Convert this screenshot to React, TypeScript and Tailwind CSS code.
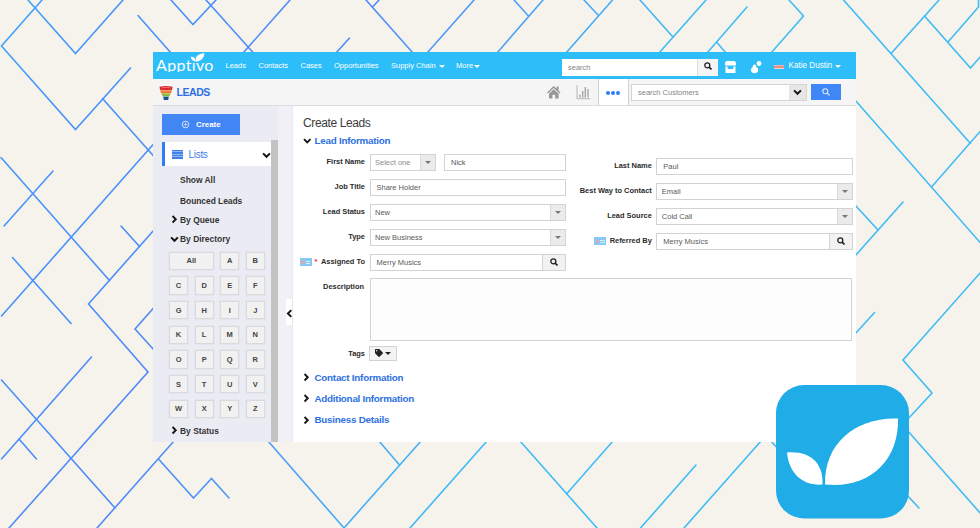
import React from "react";
import { FaTag } from "react-icons/fa";

const LINES = [
  "42,0 1.5,46 75.5,129.5 130.5,68",
  "28,0 75.5,53.5 123,0",
  "102.5,98.5 154,156.5",
  "154,143.5 1.5,316",
  "138,15.5 171,53",
  "171,0 193,24.5 216,0",
  "206,0 253.5,53",
  "243,53 290,0",
  "1,157.5 109.5,280.5",
  "53,171 4,226",
  "121,226 139.5,246.5",
  "154,230 88.5,304 148,372 9,528",
  "12.5,257.5 71,323.5",
  "154,307.5 135,329 154,350",
  "1.5,380 115,508",
  "91.5,357 1.5,459",
  "19,439 36.5,459",
  "174,441 97,528",
  "158.5,459 193.5,498 211.5,478.5 229,498",
  "268,441 344,528 421,441",
  "366,0 413,53",
  "379,0 372.5,7",
  "336,53 349.5,38",
  "427,53 474,0",
  "514,0 528.5,16",
  "543,0 497,53",
  "584,0 598.5,15.5",
  "612.5,0 566,53",
  "379,441 399.5,465",
  "487,441 410,528",
  "520,441 597,528",
  "613,441 566.5,494",
  "640,0 672.5,36.5",
  "706,0 659,53",
  "747,7 707,53",
  "716.5,42 726,53",
  "789,0 803.5,16 771,53",
  "843.5,0 970.5,143.5",
  "939,0 891.5,53",
  "924.5,16 970.5,68 981,56",
  "948,42 978.5,7 978.5,0",
  "855,100 981,243.5",
  "981,130.5 931.5,187",
  "855,205 878,230",
  "903,202 855,256",
  "874.5,312.5 855,334",
  "981,272 903,360 932,393 907,420",
  "907,430 981,514",
  "905,493 919,508",
  "696,465 640.5,528",
  "761,441 684,528",
  "771,441 780,451",
];

function Backdrop() {
  return (
    <svg className="absolute inset-0" width="980" height="528" viewBox="0 0 980 528" fill="none">
      <defs>
        <linearGradient id="ln" gradientUnits="userSpaceOnUse" x1="0" y1="0" x2="560" y2="280">
          <stop offset="0" stopColor="#3ea8f8" />
          <stop offset="0.15" stopColor="#4795fb" />
          <stop offset="0.5" stopColor="#4f88f8" />
          <stop offset="0.75" stopColor="#4ca0f7" />
          <stop offset="1" stopColor="#3fbbf6" />
        </linearGradient>
      </defs>
      {LINES.map((p) => (
        <polyline key={p} points={p} stroke="url(#ln)" strokeWidth="1.6" strokeLinecap="round" />
      ))}
    </svg>
  );
}

type ChevronProps = { dir: "down" | "right" | "left"; size?: number; className?: string };

function Chevron({ dir, size = 8, className = "" }: ChevronProps) {
  const d = dir === "down" ? "M1.200 2.600L5 6.400L8.800 2.600" : dir === "right" ? "M3 1.200L6.800 5L3 8.800" : "M7 1.200L3.200 5L7 8.800";
  return (
    <svg width={size} height={size} viewBox="0 0 10 10" fill="none" stroke="#151515" strokeWidth="2.200" className={"shrink-0 " + className}>
      <path d={d} />
    </svg>
  );
}

function Magnifier() {
  return (
    <svg width="8" height="8" viewBox="0 0 8 8" fill="none" stroke="#222">
      <circle cx="3.300" cy="3.300" r="2.500" strokeWidth="1.300" />
      <path d="M5.100 5.100L7.500 7.500" strokeWidth="1.600" />
    </svg>
  );
}

function Logo() {
  return (
    <div className="relative h-[20.500px] w-[60px] overflow-hidden text-white">
      <span className="block h-[20px] whitespace-nowrap pt-[4.500px] font-['Lato'] text-[16px] leading-[17px] tracking-[0.350px]">Apptıvo</span>
      <svg className="absolute left-[34px] top-[0.500px]" width="16" height="11" viewBox="0 0 16 11" fill="#fff">
        <path d="M5.500 9.500C5 4.500 8 1.500 14.500 1.200C14 6.300 10.500 9.500 5.500 9.500Z" />
        <path d="M.8 4.800C4 4.500 5.600 6 5.400 9.500C2.500 9.200 1.200 7.500 .8 4.800Z" />
      </svg>
    </div>
  );
}

function Caret() {
  return <span className="inline-block border-x-[3px] border-t-[3px] border-x-transparent border-t-current" />;
}

function Header() {
  return (
    <div className="flex h-[27.500px] shrink-0 items-start bg-[#2dbdf9] text-[7.5px] leading-[10px] text-white">
      <div className="w-[72.5px] shrink-0 pl-[3px]">
        <Logo />
      </div>
      <nav className="flex w-[336.500px] shrink-0 whitespace-nowrap pt-[9.500px]">
        <span className="w-[33px]">Leads</span>
        <span className="w-[42px]">Contacts</span>
        <span className="w-[33.5px]">Cases</span>
        <span className="w-[57px]">Opportunities</span>
        <span className="flex w-[65px] items-center gap-[3px]">Supply Chain <Caret /></span>
        <span className="flex items-center gap-[1px]">More <Caret /></span>
      </nav>
      <div className="mt-[7px] flex h-[17px] w-[156px] shrink-0 bg-white">
        <span className="flex-1 pl-[6px] pt-[4px] text-[#858585]">search</span>
        <span className="flex w-[21px] items-center justify-center border-l border-[#ddd] bg-[#f5f5f5] pb-[2px] text-[#222]">
          <Magnifier />
        </span>
      </div>
      <svg className="ml-[6px] mt-[8.500px] shrink-0" width="13" height="14" viewBox="0 0 13 14" fill="#fff">
        <path d="M2.200 1H10.800L12 3V5.500H1V3Z" />
        <path d="M1.500 6.500V13H11.500V6.500H9.300V9H3.700V6.500Z" />
      </svg>
      <svg className="ml-[12.500px] mt-[8px] shrink-0" width="12" height="14" viewBox="0 0 12 14" fill="#fff">
        <circle cx="9" cy="3.500" r="2.400" />
        <path d="M4.500 4.500C5.800 4.500 6.300 5.500 6.300 7C8.300 8 8.600 9.800 7.800 11.500C6.800 13.700 2.300 13.700 1.300 11.500C0.500 9.800 1 8 2.800 7C2.800 5.500 3.200 4.500 4.500 4.500Z" />
      </svg>
      <div className="ml-[12.500px] mt-[13px] flex h-[4px] w-[9.500px] shrink-0 flex-col">
        <span className="h-[1px] bg-[#e9b5b2]" />
        <span className="h-[2px] bg-[#ea8f88]" />
        <span className="h-[1px] bg-[#ecd3d6]" />
      </div>
      <span className="ml-[5px] mt-[9.500px] flex items-center gap-[3px] whitespace-nowrap text-[8.150px]">Katie Dustin <Caret /></span>
    </div>
  );
}

function SubBar() {
  return (
    <div className="flex h-[27px] shrink-0 border-b-[1.500px] border-[#dcdcde] bg-[#f5f5f5]">
      <div className="flex w-[386px] shrink-0 pl-[5.500px] pt-[6.500px]">
        <svg width="14" height="15" viewBox="0 0 14 15">
          <path d="M.5 .8Q7 -.6 13.500 .8L13 4H1Z" fill="#d9272e" />
          <path d="M2.500 1.800Q7 .8 11.500 1.800" stroke="#f1a8a0" strokeWidth="0.6" fill="none" />
          <path d="M1 4H13L11.800 7.300H2.200Z" fill="#f0702c" />
          <path d="M2.200 7H11.800L10.200 10.400H3.800Z" fill="#8cb63c" />
          <path d="M1.200 4.200Q7 5.600 12.800 4.200M2.400 7.200Q7 8.400 11.600 7.200" stroke="#f8d9b0" strokeWidth="0.6" fill="none" />
          <path d="M4.200 10.800H9.800L9.200 14H4.800Z" fill="#1b4fa0" />
        </svg>
        <span className="ml-[4px] text-[10.500px] font-bold leading-[12px] tracking-[-0.450px] text-[#2e70e2]">LEADS</span>
      </div>
      <svg className="ml-[7.500px] mt-[6px] shrink-0" width="14" height="14" viewBox="0 0 14 14" fill="#979797">
        <path d="M0 7.600L6.700 1L9.600 3.800V1.600H11.600V5.700L13.500 7.600L12.500 8.600L6.700 3L1 8.600Z" />
        <path d="M2 8.700L6.700 4.200L11.600 8.700V13.500H8.200V9.800H5.400V13.500H2Z" />
      </svg>
      <svg className="ml-[15px] mt-[5.500px] shrink-0" width="15" height="15" viewBox="0 0 15 15" fill="none" stroke="#a5a5a5">
        <path d="M1 0V13.700H14.500" strokeWidth="0.8" />
        <path d="M4 12.500V9.500M6.700 12.500V6M9.300 12.500V2M12 12.500V4" strokeWidth="1.400" />
      </svg>
      <div className="ml-[7px] flex w-[31px] shrink-0 items-center justify-center gap-[1px] border-x border-[#cfcfcf] bg-white pt-[1px]">
        <span className="size-[4px] rounded-full bg-[#2f7cf6]" />
        <span className="size-[4px] rounded-full bg-[#2f7cf6]" />
        <span className="size-[4px] rounded-full bg-[#2f7cf6]" />
      </div>
      <div className="ml-[2.500px] mt-[4.500px] flex h-[17px] w-[176px] shrink-0 border border-[#d5d5d5] bg-white">
        <span className="flex-1 pl-[6px] pt-[3.500px] text-[7.500px] leading-[10px] text-[#858585]">search Customers</span>
        <span className="flex w-[17px] items-center justify-center bg-[#e6e6e6]">
          <Chevron dir="down" size={9} />
        </span>
      </div>
      <div className="ml-[3.500px] mt-[4.500px] flex h-[16.500px] w-[30px] items-center justify-center bg-[#3f86f7] text-[#dce9ff]">
        <svg width="8" height="8" viewBox="0 0 8 8" fill="none" stroke="currentColor" strokeWidth="1.100">
          <circle cx="3.300" cy="3.300" r="2.500" />
          <path d="M5.200 5.200L7.500 7.500" />
        </svg>
      </div>
    </div>
  );
}

const LETTERS = [
  ["All", "A", "B"],
  ["C", "D", "E", "F"],
  ["G", "H", "I", "J"],
  ["K", "L", "M", "N"],
  ["O", "P", "Q", "R"],
  ["S", "T", "U", "V"],
  ["W", "X", "Y", "Z"],
];

function Sidebar() {
  return (
    <aside className="flex w-[140px] shrink-0 bg-[#ebecf3]">
      <div className="w-[118px] shrink-0 text-[8.450px] font-bold leading-[10px] text-[#333]">
        <div className="ml-[9px] mt-[8px] flex h-[20.500px] w-[78px] items-center bg-[#4285f4] pl-[19px] text-[7.900px] text-white">
          <svg width="9" height="9" viewBox="0 0 9 9" fill="none" stroke="#d5e4ff">
            <circle cx="4.500" cy="4.500" r="3.300" strokeWidth="1" />
            <path d="M4.500 2.500V6.500M2.500 4.500H6.500" strokeWidth="0.700" />
          </svg>
          <span className="ml-[6px] pt-[1px]">Create</span>
        </div>
        <div className="ml-[9px] mt-[7.500px] flex h-[24px] items-center border-l-[3px] border-[#2f7cf6] bg-white pl-[7px]">
          <span className="flex h-[9px] w-[10.500px] flex-col justify-between bg-[#8fb6f6]">
            <span className="h-[1.500px] bg-[#3f80ea]" />
            <span className="h-[1.500px] bg-[#3f80ea]" />
            <span className="h-[1.500px] bg-[#3f80ea]" />
            <span className="h-[1.500px] bg-[#3f80ea]" />
          </span>
          <span className="ml-[6px] flex-1 pt-[1px] text-[10px] font-normal tracking-[-0.300px] text-[#3f7de8]">Lists</span>
          <Chevron dir="down" size={9} className="mr-[0.500px] mt-[3px]" />
        </div>
        <div className="ml-[27px] mt-[9px]">Show All</div>
        <div className="ml-[27px] mt-[10.500px] tracking-[-0.050px]">Bounced Leads</div>
        <div className="ml-[16.500px] mt-[9px] flex items-center">
          <span className="flex w-[10.500px]"><Chevron dir="right" size={8.500} /></span>By Queue
        </div>
        <div className="ml-[17px] mt-[9.500px] flex items-center">
          <span className="flex w-[10px]"><Chevron dir="down" size={9} className="mt-[1px]" /></span>By Directory
        </div>
        <div className="ml-[16px] mt-[7.500px] flex flex-col gap-[6.200px] text-[7.500px] text-[#444]">
          {LETTERS.map((row) => (
            <div key={row[0]} className="flex gap-[6.500px]">
              {row.map((l) => (
                <span
                  key={l}
                  className={
                    (l === "All" ? "w-[44.600px]" : "w-[19.100px]") +
                    " flex h-[18.500px] items-center justify-center border border-[#dadade] bg-[#f1f1f1] pt-[1px] shadow-[0_0_1px_#c8c8cc]"
                  }
                >
                  {l}
                </span>
              ))}
            </div>
          ))}
        </div>
        <div className="ml-[16.500px] mt-[7.500px] flex items-center">
          <span className="flex w-[10.500px]"><Chevron dir="right" size={8.500} /></span>By Status
        </div>
      </div>
      <div className="mt-[34px] w-[7px] shrink-0 bg-[#c3c3c3]" />
      <div className="flex flex-1 items-start justify-end border-r border-[#e9e9ee] bg-[#f0f0f6]">
        <div className="mt-[193px] flex h-[26px] w-[6.500px] items-center bg-white">
          <Chevron dir="left" size={9} className="-ml-[1px] mt-[2px]" />
        </div>
      </div>
    </aside>
  );
}

function Heading({ open, children }: { open?: boolean; children: React.ReactNode }) {
  return (
    <div className="flex h-[12px] items-center text-[9.800px] font-bold leading-[12px] tracking-[-0.230px] text-[#2d70e0]">
      <span className="flex w-[11.500px]">{open ? <Chevron dir="down" size={8.500} /> : <Chevron dir="right" size={8.500} className="-ml-[1px]" />}</span>
      {children}
    </div>
  );
}

function IdCard() {
  return (
    <span className="flex h-[7.500px] w-[12px] shrink-0 items-center gap-[1px] bg-[#86c8f6] px-[1.500px]">
      <span className="h-[4.500px] w-[3.500px] rounded-t-full bg-[#cfaeb0]" />
      <span className="flex flex-1 flex-col gap-[1px]">
        <span className="h-[1px] bg-[#d5eefc]" />
        <span className="h-[1px] bg-[#d5eefc]" />
      </span>
    </span>
  );
}

type FieldProps = { label: string; value: string; kind?: "text" | "select" | "lookup"; card?: boolean; required?: boolean };

function Label({ label, card, required }: { label: string; card?: boolean; required?: boolean }) {
  return (
    <span className="flex flex-1 items-center justify-end whitespace-nowrap pr-[4.500px] text-[7.450px] font-bold text-[#2b2b2b]">
      {card && <IdCard />}
      {required && <span className="ml-[3px] text-[#e33]">*</span>}
      <span className="ml-[3.500px]">{label}</span>
    </span>
  );
}

function Field({ label, value, kind = "text", card, required }: FieldProps) {
  return (
    <div className="flex h-[17px] leading-[10px]">
      <Label label={label} card={card} required={required} />
      <span className="flex w-[196.500px] shrink-0 border border-[#d3d3d3] bg-white text-[7.500px] text-[#5a5a5a]">
        <span className={(kind === "select" ? "pl-[4.500px]" : "pl-[6px]") + " flex-1 pt-[3.500px]"}>{value}</span>
        {kind === "select" && (
          <span className="flex w-[15px] items-center justify-center border-l border-[#d9d9d9] bg-[#ebebeb] text-[#777]"><Caret /></span>
        )}
        {kind === "lookup" && (
          <span className="flex w-[23px] items-center justify-center border-l border-[#d3d3d3] bg-[#f2f2f2] text-[#222]"><Magnifier /></span>
        )}
      </span>
    </div>
  );
}

function Form() {
  return (
    <main className="min-w-0 flex-1 bg-white pl-[10px]">
      <h1 className="mt-[11px] text-[12px] leading-[13px] tracking-[-0.380px] text-[#3c3c3c]">Create Leads</h1>
      <div className="mt-[5px]"><Heading open>Lead Information</Heading></div>
      <div className="mt-[6.500px] flex">
        <div className="-ml-[7px] flex w-[270px] shrink-0 flex-col gap-[8px]">
          <div className="flex h-[17px] leading-[10px]">
            <Label label="First Name" />
            <span className="flex w-[66px] border border-[#d3d3d3] text-[7.500px] text-[#8d8d8d]">
              <span className="flex-1 pl-[4.500px] pt-[3.500px]">Select one</span>
              <span className="flex w-[15px] items-center justify-center border-l border-[#d9d9d9] bg-[#ebebeb] text-[#777]"><Caret /></span>
            </span>
            <span className="ml-[8.500px] w-[122px] border border-[#d3d3d3] pl-[6px] pt-[3.500px] text-[7.500px] text-[#5a5a5a]">Nick</span>
          </div>
          <Field label="Job Title" value="Share Holder" />
          <Field label="Lead Status" value="New" kind="select" />
          <Field label="Type" value="New Business" kind="select" />
          <Field label="Assigned To" value="Merry Musics" kind="lookup" card required />
        </div>
        <div className="ml-[7px] mt-[4px] flex w-[279.800px] shrink-0 flex-col gap-[8px]">
          <Field label="Last Name" value="Paul" />
          <Field label="Best Way to Contact" value="Email" kind="select" />
          <Field label="Lead Source" value="Cold Call" kind="select" />
          <Field label="Referred By" value="Merry Musics" kind="lookup" card />
        </div>
      </div>
      <div className="mt-[7.500px] flex">
        <span className="w-[61px] pt-[4px] text-right text-[7.450px] font-bold leading-[10px] text-[#2b2b2b]">Description</span>
        <span className="ml-[6px] h-[63px] w-[481.500px] border border-[#d3d3d3] bg-[#fdfdfd]" />
      </div>
      <div className="mt-[4.500px] flex h-[15px] items-center leading-[10px]">
        <span className="w-[62px] pt-[1px] text-right text-[7.450px] font-bold text-[#2b2b2b]">Tags</span>
        <span className="ml-[4px] flex h-[15px] w-[28px] items-center justify-center gap-[2.500px] border border-[#d3d3d3] bg-[#f3f3f3] text-[#222]">
          <FaTag size={8} />
          <Caret />
        </span>
      </div>
      <div className="mt-[11px] flex flex-col gap-[9.200px]">
        <Heading>Contact Information</Heading>
        <Heading>Additional Information</Heading>
        <Heading>Business Details</Heading>
      </div>
    </main>
  );
}

function AppBadge() {
  return (
    <svg className="absolute left-[775px] top-[384px]" width="136" height="136" viewBox="775 384 136 136">
      <rect x="776" y="385" width="133" height="133.500" rx="28" fill="#20ace6" />
      <path d="M898 418.500C856 417 824 443 825 484.500C868 489 899 462 898 418.500Z" fill="#fff" />
      <path d="M787 452.500C810 450.500 823.500 463 822.500 484.500C803 486 789 474 787 452.500Z" fill="#fff" />
    </svg>
  );
}

export default function App() {
  return (
    <div className="relative h-[528px] w-[980px] overflow-hidden bg-[#f6f3ec] font-['Liberation_Sans',sans-serif]">
      <Backdrop />
      <div className="relative pl-[153px] pt-[51.500px]">
        <div className="flex h-[390px] w-[703px] flex-col overflow-hidden bg-white">
          <Header />
          <SubBar />
          <div className="flex min-h-0 flex-1">
            <Sidebar />
            <Form />
          </div>
        </div>
      </div>
      <AppBadge />
    </div>
  );
}
